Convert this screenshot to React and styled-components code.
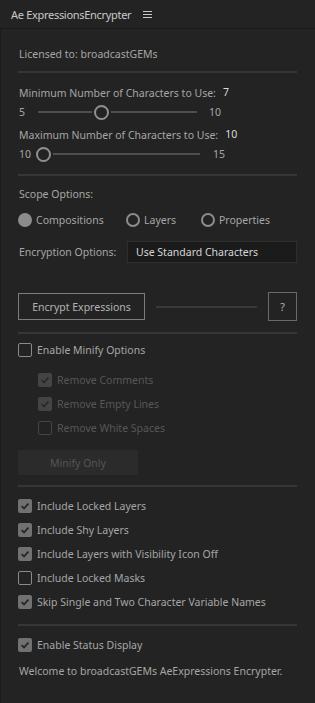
import React from "react";
import styled, { createGlobalStyle } from "styled-components";

const Global = createGlobalStyle`
  html, body { margin: 0; padding: 0; background: #232323; }
  body { font-family: "Noto Sans", "Open Sans", sans-serif; font-size: 10.5px; color: #a6a6a6; }
  * { box-sizing: border-box; }
`;

const Frame = styled.div`
  width: 315px;
  height: 703px;
  background: #232323;
  display: flex;
  flex-direction: column;
`;

const Header = styled.div`
  height: 29px;
  flex: none;
  display: flex;
  align-items: center;
  padding-left: 11px;
  gap: 12px;
  border-bottom: 1px solid #1a1a1a;
`;

const Title = styled.span`
  font-size: 11px;
  letter-spacing: -0.3px;
  color: #c9c9c9;
`;

const Menu = styled.span`
  display: flex;
  flex-direction: column;
  gap: 2px;
  width: 9px;
  & > i { display: block; height: 1px; background: #c9c9c9; }
`;

const Panel = styled.div`
  flex: 1;
  padding: 0 18px 0 17px;
  display: flex;
  flex-direction: column;
  border-left: 1px solid #1c1c1c;
`;

const Row = styled.div`
  height: ${p => p.$h || 18}px;
  margin-top: ${p => p.$mt || 0}px;
  padding-left: ${p => p.$pl ?? 1}px;
  display: flex;
  align-items: center;
  white-space: nowrap;
`;

const Label = styled.span`
  color: #a6a6a6;
`;

const Value = styled.span`
  color: #dcdcdc;
  margin-left: 7px;
  position: relative;
  top: -1px;
`;

const Separator = styled.div`
  height: 2px;
  background: #363636;
  margin-top: ${p => p.$mt || 0}px;
  flex: none;
`;

const SliderMin = styled.span`
  width: ${p => p.$w}px;
  flex: none;
  color: #a6a6a6;
`;

const Track = styled.div`
  position: relative;
  width: ${p => p.$w}px;
  height: 2px;
  background: #4e4e4e;
  flex: none;
  margin-right: ${p => p.$mr}px;
`;

const Thumb = styled.div`
  position: absolute;
  top: 50%;
  width: 15px;
  height: 15px;
  margin: -7.5px 0 0 -7.5px;
  border-radius: 50%;
  border: 2px solid #8f8f8f;
  background: #232323;
  box-shadow: 0 0 0 2px #232323;
`;

const RadioItem = styled.label`
  width: ${p => p.$w}px;
  flex: none;
  display: flex;
  align-items: center;
  gap: 4px;
  color: #a6a6a6;
`;

const RadioDot = styled.span`
  width: 14px;
  height: 14px;
  border-radius: 50%;
  border: 2px solid #8c8c8c;
  background: ${p => (p.$on ? "#8c8c8c" : "transparent")};
  flex: none;
`;

const Dropdown = styled.div`
  width: 170px;
  height: 22px;
  margin-left: auto;
  background: #1b1b1b;
  border: 1px solid #2e2e2e;
  color: #d6d6d6;
  display: flex;
  align-items: center;
  padding-left: 8px;
`;

const Button = styled.div`
  width: ${p => p.$w}px;
  height: ${p => p.$h}px;
  flex: none;
  display: flex;
  align-items: center;
  justify-content: center;
  border: 1px solid ${p => (p.$disabled ? "transparent" : p.$border || "#7c7c7c")};
  background: ${p => (p.$disabled ? "#2b2b2b" : "transparent")};
  color: ${p => (p.$disabled ? "#555555" : "#b3b3b3")};
`;

const Progress = styled.div`
  flex: none;
  width: 101px;
  height: 2px;
  background: #383838;
  margin: 0 11px;
`;

const CheckRow = styled.label`
  height: 18px;
  margin-top: ${p => p.$mt || 0}px;
  padding-left: ${p => p.$pl || 0}px;
  display: flex;
  align-items: center;
  gap: 5px;
  white-space: nowrap;
  color: ${p => (p.$disabled ? "#575757" : "#a6a6a6")};
`;

const Box = styled.span`
  width: 14px;
  height: 14px;
  flex: none;
  border-radius: 2px;
  display: flex;
  align-items: center;
  justify-content: center;
  background: ${p => (p.$on ? (p.$disabled ? "#444444" : "#717171") : "transparent")};
  border: ${p => (p.$on ? "none" : `1.5px solid ${p.$disabled ? "#454545" : "#8a8a8a"}`)};
`;

const Check = ({ on, disabled }) => (
  <Box $on={on} $disabled={disabled}>
    {on && (
      <svg width="10" height="10" viewBox="0 0 10 10">
        <path d="M1.6 5.2 L4 7.5 L8.4 2.6" fill="none" stroke={disabled ? "#2a2a2a" : "#262626"} strokeWidth="1.8" />
      </svg>
    )}
  </Box>
);

const Item = ({ on, disabled, children, mt, pl }) => (
  <CheckRow $mt={mt} $pl={pl} $disabled={disabled}>
    <Check on={on} disabled={disabled} />
    {children}
  </CheckRow>
);

export default function App() {
  return (
    <>
      <Global />
      <Frame>
        <Header>
          <Title>Ae ExpressionsEncrypter</Title>
          <Menu><i /><i /><i /></Menu>
        </Header>
        <Panel>
          <Row $mt={16}><Label>Licensed to: broadcastGEMs</Label></Row>
          <Separator $mt={8} />
          <Row $mt={11}><Label>Minimum Number of Characters to Use:</Label><Value>7</Value></Row>
          <Row $mt={1}>
            <SliderMin $w={19}>5</SliderMin>
            <Track $w={159} $mr={12}><Thumb style={{ left: "40%" }} /></Track>
            <Label>10</Label>
          </Row>
          <Row $mt={5}><Label>Maximum Number of Characters to Use:</Label><Value>10</Value></Row>
          <Row $mt={1}>
            <SliderMin $w={17}>10</SliderMin>
            <Track $w={164} $mr={13}><Thumb style={{ left: "7px" }} /></Track>
            <Label>15</Label>
          </Row>
          <Separator $mt={11} />
          <Row $mt={9}><Label>Scope Options:</Label></Row>
          <Row $mt={8} $pl={0}>
            <RadioItem $w={108}><RadioDot $on />Compositions</RadioItem>
            <RadioItem $w={75}><RadioDot />Layers</RadioItem>
            <RadioItem $w={90}><RadioDot />Properties</RadioItem>
          </Row>
          <Row $mt={12} $h={22}>
            <Label>Encryption Options:</Label>
            <Dropdown>Use Standard Characters</Dropdown>
          </Row>
          <Row $mt={29} $h={29} $pl={0}>
            <Button $w={127} $h={27}>Encrypt Expressions</Button>
            <Progress />
            <Button $w={29} $h={29} $border="#6a6a6a">?</Button>
          </Row>
          <Separator $mt={11} />
          <Item mt={7}>Enable Minify Options</Item>
          <Item mt={12} pl={20} on disabled>Remove Comments</Item>
          <Item mt={6} pl={20} on disabled>Remove Empty Lines</Item>
          <Item mt={6} pl={20} disabled>Remove White Spaces</Item>
          <Row $mt={13} $h={25} $pl={0}>
            <Button $w={120} $h={25} $disabled>Minify Only</Button>
          </Row>
          <Separator $mt={10} />
          <Item mt={10} on>Include Locked Layers</Item>
          <Item mt={6} on>Include Shy Layers</Item>
          <Item mt={6} on>Include Layers with Visibility Icon Off</Item>
          <Item mt={6}>Include Locked Masks</Item>
          <Item mt={6} on>Skip Single and Two Character Variable Names</Item>
          <Separator $mt={13} />
          <Item mt={10} on>Enable Status Display</Item>
          <Row $mt={8}><Label>Welcome to broadcastGEMs AeExpressions Encrypter.</Label></Row>
        </Panel>
      </Frame>
    </>
  );
}
